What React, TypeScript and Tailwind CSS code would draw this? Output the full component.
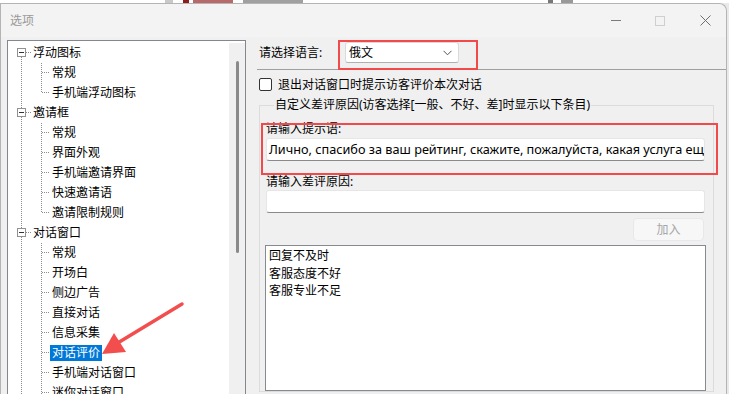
import React from "react";

type Node = { label: string; children: string[] };

const TREE: Node[] = [
  { label: "浮动图标", children: ["常规", "手机端浮动图标"] },
  { label: "邀请框", children: ["常规", "界面外观", "手机端邀请界面", "快速邀请语", "邀请限制规则"] },
  {
    label: "对话窗口",
    children: ["常规", "开场白", "侧边广告", "直接对话", "信息采集", "对话评价", "手机端对话窗口", "迷你对话窗口", "访客信息"],
  },
];

const SELECTED = "对话评价";
const DOT = "#8c8c8c";

/** 树的根节点连接线（⊟ 框 + 虚线） */
function RootGlyph({ first }: { first: boolean }) {
  return (
    <svg width="23" height="20" className="shrink-0" shapeRendering="crispEdges">
      {!first && <line x1="13.5" y1="0" x2="13.5" y2="5" stroke={DOT} strokeDasharray="1 1" />}
      <line x1="13.5" y1="14" x2="13.5" y2="20" stroke={DOT} strokeDasharray="1 1" />
      <line x1="18" y1="9.5" x2="23" y2="9.5" stroke={DOT} strokeDasharray="1 1" />
      <rect x="9.5" y="5.5" width="8" height="8" fill="#fff" stroke="#919191" />
      <line x1="11" y1="9.5" x2="16" y2="9.5" stroke="#333" />
    </svg>
  );
}

/** 子节点连接线 */
function ChildGlyph({ last }: { last: boolean }) {
  return (
    <svg width="42" height="20" className="shrink-0" shapeRendering="crispEdges">
      <line x1="13.5" y1="0" x2="13.5" y2="20" stroke={DOT} strokeDasharray="1 1" />
      <line x1="33.5" y1="0" x2="33.5" y2={last ? 10 : 20} stroke={DOT} strokeDasharray="1 1" />
      <line x1="34" y1="9.5" x2="42" y2="9.5" stroke={DOT} strokeDasharray="1 1" />
    </svg>
  );
}

function TreePanel() {
  return (
    <div className="flex h-[400px] w-[239px] shrink-0 border border-[#828790] bg-white">
      <div className="flex-1 overflow-hidden pt-[2px]">
        {TREE.map((node, i) => (
          <div key={node.label}>
            <div className="flex h-[20px] items-center">
              <RootGlyph first={i === 0} />
              <span className="px-[2px] leading-[16px]">{node.label}</span>
            </div>
            {node.children.map((c, j) => (
              <div key={c + j} className="flex h-[20px] items-center">
                <ChildGlyph last={j === node.children.length - 1} />
                <span
                  className={
                    c === SELECTED
                      ? "h-[16px] bg-[#0078d7] px-[2px] leading-[16px] text-white"
                      : "px-[2px] leading-[16px]"
                  }
                >
                  {c}
                </span>
              </div>
            ))}
          </div>
        ))}
      </div>
      <div className="mt-[2px] flex w-[16px] justify-center bg-[#f0f0f0] pt-[18px]">
        <div className="h-[192px] w-[3px] rounded-full bg-[#8a8a8a]" />
      </div>
    </div>
  );
}

function SettingsPanel() {
  return (
    <div className="relative ml-[13px] flex min-w-0 flex-1 flex-col">
      {/* 语言选择 */}
      <div className="mt-[2px] flex h-[21px] items-center">
        <span className="w-[86px]">请选择语言:</span>
        <div className="flex h-[21px] w-[114px] items-center justify-between rounded-[3px] border border-[#dadada] border-b-[#b0b0b0] bg-white pl-[3px] pr-[6px]">
          <span>俄文</span>
          <svg width="9" height="6" viewBox="0 0 9 6">
            <path d="M0.5 0.8 L4.5 4.8 L8.5 0.8" fill="none" stroke="#555" strokeWidth="1" />
          </svg>
        </div>
      </div>
      <div className="-ml-[2px] mt-[6px] h-px bg-[#a0a0a0]" />

      {/* 退出提示 */}
      <label className="mt-[8px] flex h-[13px] items-center gap-[6px]">
        <span className="h-[13px] w-[13px] rounded-[2px] border border-[#333] bg-white" />
        <span className="leading-[16px]">退出对话窗口时提示访客评价本次对话</span>
      </label>

      {/* 自定义差评原因 */}
      <fieldset className="mt-[6px] w-[455px] min-w-0 border border-[#dcdcdc] pb-0 pl-[6px] pr-[8px]">
        <legend className="ml-[8px] px-[1px] leading-[16px]">
          自定义差评原因(访客选择[一般、不好、差]时显示以下条目)
        </legend>
        <div className="mt-[8px] leading-[16px]">请输入提示语:</div>
        <div className="mt-[1px] flex h-[23px] min-w-0 items-center overflow-hidden whitespace-nowrap rounded-[3px] border border-[#e6e6e6] border-b-[#8a8a8a] bg-white pl-[2px] text-[12.7px]">
          Лично, спасибо за ваш рейтинг, скажите, пожалуйста, какая услуга еще нуждается в улучшении?
        </div>
        <div className="mt-[13px] leading-[16px]">请输入差评原因:</div>
        <div className="h-[23px] rounded-[3px] border border-[#e6e6e6] border-b-[#8a8a8a] bg-white" />
        <div className="mt-[5px] flex justify-end">
          <button className="mr-px h-[23px] w-[71px] rounded-[4px] border border-[#e8e8e8] bg-[#f7f7f7] text-[#a6a6a6]">
            加入
          </button>
        </div>
        <div className="-mx-px mt-[4px] h-[146px] border border-[#868a91] bg-white px-[3px] pt-[1px] leading-[17.5px]">
          <div>回复不及时</div>
          <div>客服态度不好</div>
          <div>客服专业不足</div>
        </div>
      </fieldset>

      {/* 标注框 */}
      <div className="pointer-events-none absolute left-[79px] top-0 h-[30px] w-[140px] border-2 border-[#f24a4a]" />
      <div className="pointer-events-none absolute left-[2px] top-[83px] h-[52px] w-[457px] border-2 border-[#f24a4a]" />
    </div>
  );
}

export default function App() {
  return (
    <div className="relative h-[394px] w-[729px] overflow-hidden bg-[#e9e9e9] font-['Noto_Sans','Noto_Sans_CJK_SC',sans-serif] text-[12px] text-black">
      {/* 后面窗口露出的一条 */}
      <div className="flex h-[3px] bg-white">
        <div className="ml-[165px] w-[8px] bg-[#c9c9c9]" />
        <div className="ml-[10px] w-[6px] bg-[#8b1d1d]" />
        <div className="ml-[4px] w-[40px] bg-[#b86a6a]" />
        <div className="ml-[10px] w-[60px] bg-[#a0a0a0]" />
        <div className="ml-[245px] w-[5px] bg-[#777]" />
        <div className="ml-[8px] w-[12px] bg-[#999]" />
      </div>

      <div className="mr-[2px] flex h-[391px] flex-col rounded-tr-[8px] border-l border-r border-t border-[#b4b4b4] bg-[#f0f0f0]">
        {/* 标题栏 */}
        <div className="flex h-[33px] shrink-0 items-center rounded-tr-[8px] bg-[#f3f3f3]">
          <span className="ml-[9px] flex-1 text-[#999]">选项</span>
          <div className="mr-[15px] flex items-center">
            <div className="h-px w-[10px] bg-[#7a7a7a]" />
            <div className="ml-[34px] h-[10px] w-[10px] border border-[#cfcfcf]" />
            <svg width="11" height="11" viewBox="0 0 11 11" className="ml-[35px]">
              <path d="M0.5 0.5 L10.5 10.5 M10.5 0.5 L0.5 10.5" stroke="#707070" strokeWidth="1" />
            </svg>
          </div>
        </div>

        {/* 主体 */}
        <div className="flex flex-1 overflow-hidden pl-[6px] pt-[3px]">
          <TreePanel />
          <SettingsPanel />
        </div>
      </div>

      {/* 红色箭头标注 */}
      <svg width="729" height="394" className="pointer-events-none absolute left-0 top-0">
        <line x1="182" y1="304" x2="116" y2="344" stroke="#f24e4e" strokeWidth="3.5" strokeLinecap="round" />
        <polygon points="102,354 114,333 126,352" fill="#f24e4e" />
      </svg>
    </div>
  );
}
